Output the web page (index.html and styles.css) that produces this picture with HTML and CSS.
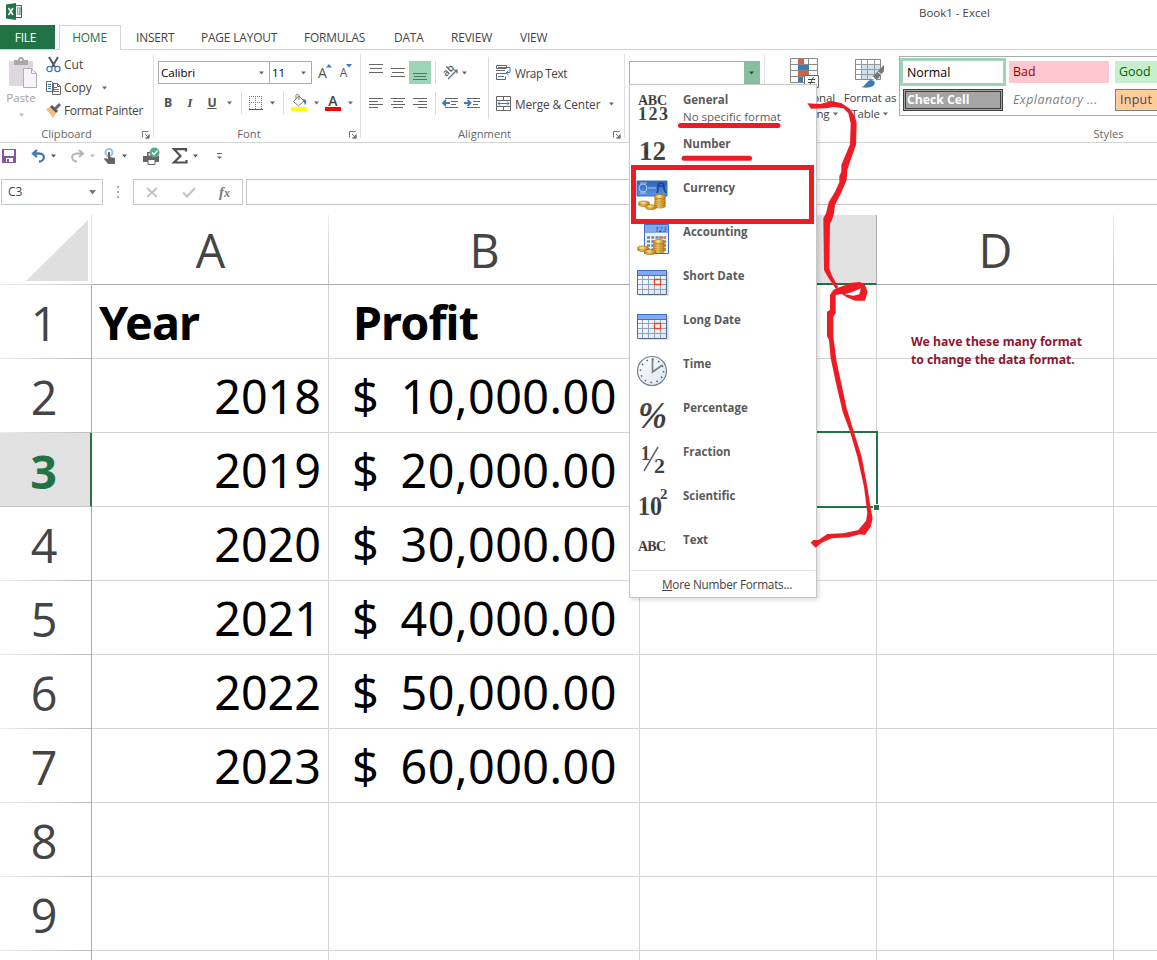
FILE: index.html
```html
<!DOCTYPE html>
<html lang="en">
<head>
<meta charset="utf-8">
<title>Book1 - Excel</title>
<link rel="stylesheet" href="styles.css">
</head>
<body>
<svg class="defs" width="0" height="0">
  <defs>
    <symbol id="arrow" viewBox="0 0 7 4"><path d="M1 0.5h5L3.5 3.5z" fill="currentColor"/></symbol>
    <symbol id="launch" viewBox="0 0 8 8"><path d="M0.5 6.5v-6h6M3 3l3.5 3.5M7 3.500v3.500H3.500" fill="none" stroke="#777"/><path d="M7.500 3v4.500H3z" fill="#777"/></symbol>
    <linearGradient id="metal" x1="0" y1="0" x2="0" y2="1"><stop offset="0" stop-color="#666"/><stop offset=".55" stop-color="#333"/><stop offset="1" stop-color="#5a5a5a"/></linearGradient>
    <linearGradient id="blue" x1="0" y1="0" x2="0" y2="1"><stop offset="0" stop-color="#2f62bd"/><stop offset="1" stop-color="#5d94e2"/></linearGradient>
    <linearGradient id="gold" x1="0" y1="0" x2="1" y2="0"><stop offset="0" stop-color="#d79a24"/><stop offset=".4" stop-color="#ffe48b"/><stop offset="1" stop-color="#bd7c10"/></linearGradient>
    <linearGradient id="face" x1="0" y1="0" x2="1" y2="1"><stop offset="0" stop-color="#fff"/><stop offset="1" stop-color="#d9e4f1"/></linearGradient>
    <symbol id="coins" viewBox="0 0 28 16">
      <g fill="url(#gold)" stroke="#a8710f" stroke-width=".7">
        <ellipse cx="6" cy="10.500" rx="5.500" ry="2"/><ellipse cx="6" cy="9" rx="5.500" ry="2"/>
        <ellipse cx="22" cy="12" rx="5.500" ry="2"/><ellipse cx="22" cy="10" rx="5.500" ry="2"/><ellipse cx="22" cy="8" rx="5.500" ry="2"/><ellipse cx="22" cy="6" rx="5.500" ry="2"/><ellipse cx="22" cy="4" rx="5.500" ry="2"/><ellipse cx="22" cy="2.500" rx="5.500" ry="2"/>
        <ellipse cx="13" cy="13.800" rx="5.500" ry="1.800"/><ellipse cx="13" cy="12.500" rx="5.500" ry="1.800"/>
      </g>
    </symbol>
    <symbol id="calendar" viewBox="0 0 32 28">
      <path d="M2 3h30v24H2z" fill="#ccc" opacity=".6"/><path d="M.5 1.500h29v24H.5z" fill="url(#face)" stroke="#526a86"/>
      <path d="M1 2h28v5H1z" fill="#83aaf5"/><path d="M0 1.500h30M1 6.500h28" stroke="#3f70d2"/>
      <path d="M5.500 7v18M11.500 7v18M17.500 7v18M23.500 7v18M1 10.500h28M1 15.500h28M1 20.500h28" stroke="#8fa2bd" fill="none"/>
      <path d="M17.500 10.500h6v5h-6z" fill="#fff" stroke="#e0481d" stroke-width="1.300"/>
    </symbol>
  </defs>
</svg>
<div class="app">
  <header class="titlebar">
    <svg class="logo" width="17" height="17" viewBox="0 0 17 17"><path d="M9 2.500h6.500v12H9z" fill="#fff" stroke="#217346"/><path d="M11 5h1.500M13 5h2M11 7h1.500M13 7h2M11 9h1.500M13 9h2M11 11h1.500M13 11h2" stroke="#217346"/><path d="M0 1.500L10 0v17L0 15.500z" fill="#217346"/><path d="M2.500 5l4.500 7M7 5l-4.500 7" stroke="#fff" stroke-width="1.600"/></svg>
    <span class="doc">Book1 - Excel</span>
  </header>
  <nav class="tabs">
    <span class="tab file">FILE</span><span class="tab home">HOME</span><span class="tab insert">INSERT</span><span class="tab layout">PAGE LAYOUT</span><span class="tab formulas">FORMULAS</span><span class="tab data">DATA</span><span class="tab review">REVIEW</span><span class="tab view">VIEW</span>
  </nav>
  <section class="ribbon">
    <div class="group clipboard">
      <div class="body">
        <div class="paste">
          <svg width="29" height="31" viewBox="0 0 29 31"><path d="M0 3h24v25H0z" fill="#ddd8dd"/><path d="M5 2h4a3 3 0 0 1 6 0h4v5H5z" fill="#aaa"/><circle cx="12" cy="2" r="1" fill="#fff"/><path d="M14.500 10.500h8l5 5v14h-13z" fill="#f8f5fa" stroke="#b4acb6"/><path d="M22.500 10.500v5h5" fill="none" stroke="#b4acb6"/></svg>
          <span>Paste</span><svg class="ar" width="7" height="4"><use href="#arrow"/></svg>
        </div>
        <div class="clips">
          <div class="clip"><svg width="15" height="16" viewBox="0 0 15 16"><path d="M3 0l6 10M12 0L6 10" stroke="#555" stroke-width="2"/><circle cx="3.500" cy="12" r="2.600" fill="none" stroke="#3f7ab8" stroke-width="1.300"/><circle cx="11.500" cy="12" r="2.600" fill="none" stroke="#3f7ab8" stroke-width="1.300"/></svg><span>Cut</span></div>
          <div class="clip"><svg width="15" height="15" viewBox="0 0 15 15"><path d="M.5 1.500h5l2 2v8h-7zM6.500 3.500h5l3 3v8h-8z" fill="#fff" stroke="#666"/><path d="M11.500 3.500v3h3" fill="none" stroke="#666"/><path d="M2 4.500h3M2 6.500h3M2 8.500h3M8 7.500h3M8 9.500h5M8 11.500h5" stroke="#3f7ab8"/></svg><span class="t-copy">Copy</span><svg class="ar" width="7" height="4"><use href="#arrow"/></svg></div>
          <div class="clip"><svg width="15" height="15" viewBox="0 0 15 15"><path d="M0 6l4-2 6 6-3 5z" fill="#eec07d"/><path d="M4 4l2-2 6 6-2 2z" fill="#555"/><path d="M9 6l5-5" stroke="#666" stroke-width="3"/></svg><span class="t-fp">Format Painter</span></div>
        </div>
      </div>
      <div class="label">Clipboard<svg class="launch" width="8" height="8"><use href="#launch"/></svg></div>
    </div>
    <div class="group font">
      <div class="body">
        <div class="fields">
          <div class="combo family"><span>Calibri</span><svg width="7" height="4"><use href="#arrow"/></svg></div>
          <div class="combo size"><span>11</span><svg width="7" height="4"><use href="#arrow"/></svg></div>
          <span class="grow">A<svg width="6" height="4" viewBox="0 0 6 4"><path d="M0 3.500L3 0l3 3.500z" fill="#3f7ab8"/></svg></span>
          <span class="grow shrink">A<svg width="6" height="4" viewBox="0 0 6 4"><path d="M0 0h6L3 3.500z" fill="#3f7ab8"/></svg></span>
        </div>
        <div class="fonttools">
          <b>B</b><i>I</i><u>U</u><svg width="7" height="4"><use href="#arrow"/></svg><span class="sep"></span>
          <svg width="14" height="14" viewBox="0 0 14 14"><path d="M0 .5h14M0 6.500h14M.5 0v13M6.500 0v13M12.500 0v13" stroke="#777" stroke-dasharray="1 1"/><path d="M0 13.500h14" stroke="#555"/></svg>
          <svg width="7" height="4"><use href="#arrow"/></svg><span class="sep"></span>
          <svg width="17" height="17" viewBox="0 0 17 17"><path d="M2.500 7.500L8 2l5 5-5.500 5z" fill="#fff" stroke="#777"/><path d="M5 5V1.500c0-1.500 3-1.500 3 0V6" fill="none" stroke="#777"/><path d="M12 5c4 0 4 4 2 6-1-1 0-3-2-4z" fill="#3f7ab8"/><path d="M0 13h16v4H0z" fill="#ff0"/></svg>
          <svg width="7" height="4"><use href="#arrow"/></svg>
          <span class="fcolor">A</span>
          <svg width="7" height="4"><use href="#arrow"/></svg>
        </div>
      </div>
      <div class="label">Font<svg class="launch" width="8" height="8"><use href="#launch"/></svg></div>
    </div>
    <div class="group align">
      <div class="body">
        <div class="arow">
          <svg width="14" height="23"><path d="M0 3.500h14M1 7.500h12M0 11.500h14" stroke="#666"/></svg>
          <svg width="14" height="23"><path d="M0 7.500h14M1 11.500h12M0 15.500h14" stroke="#666"/></svg>
          <span class="on"><svg width="14" height="23"><path d="M0 12.500h14M1 15.500h12M0 18.500h14" stroke="#4f7560"/></svg></span>
          <span class="sep"></span>
          <span class="orient"><svg width="17" height="17" viewBox="0 0 17 17"><text x="1" y="11" transform="rotate(-45 5 8)" class="abt">ab</text><path d="M6 15l9-9M11.500 6H15v3.500" fill="none" stroke="#666" stroke-width="1.200"/></svg><svg width="7" height="4"><use href="#arrow"/></svg></span>
          <span class="sep tall"></span>
          <svg width="16" height="15" viewBox="0 0 16 15"><path d="M.5 .5h10v3H.5zM10 8.500H.5v6h9v-3" fill="none" stroke="#666"/><path d="M0 5.500h9" stroke="#666"/><path d="M2 2.500h12v5h-4M12.500 5.500L10 8l2.500 2M2 8.500h5M2 11.500h6" fill="none" stroke="#3f7ab8"/></svg>
          <span class="t-wrap">Wrap Text</span>
        </div>
        <div class="arow">
          <svg width="14" height="12"><path d="M0 .5h14M0 3.500h9M0 6.500h14M0 9.500h9" stroke="#666"/></svg>
          <svg width="14" height="12"><path d="M0 .5h14M2 3.500h10M0 6.500h14M2 9.500h10" stroke="#666"/></svg>
          <svg width="14" height="12"><path d="M0 .5h14M5 3.500h9M0 6.500h14M5 9.500h9" stroke="#666"/></svg>
          <span class="sep"></span>
          <span class="orient indents"><svg width="17" height="12"><path d="M3 .5h13M9 3.500h7M9 6.500h5M3 9.500h13" stroke="#666"/><path d="M1 5h7M4 2L1 5l3 3" stroke="#3f7ab8" stroke-width="1.800" fill="none"/></svg><svg width="17" height="12"><path d="M3 .5h13M9 3.500h7M9 6.500h5M3 9.500h13" stroke="#666"/><path d="M0 5h6M3.500 2l3 3-3 3" stroke="#3f7ab8" stroke-width="1.800" fill="none"/></svg></span>
          <span class="sep tall"></span>
          <svg width="15" height="15" viewBox="0 0 15 15"><path d="M.5 .5h14v14H.5zM.5 4.500h14M.5 10.500h14M7.500 .5v4M7.500 10.500v4" fill="none" stroke="#666"/><path d="M2 7.500h11M4 5.500l-2 2 2 2M11 5.500l2 2-2 2" fill="none" stroke="#3f7ab8"/></svg>
          <span class="t-merge">Merge &amp; Center<svg width="7" height="4"><use href="#arrow"/></svg></span>
        </div>
      </div>
      <div class="label">Alignment<svg class="launch" width="8" height="8"><use href="#launch"/></svg></div>
    </div>
    <div class="group number">
      <div class="nfield"><span class="nbtn"><svg width="7" height="4"><use href="#arrow"/></svg></span></div>
    </div>
    <div class="group styles">
      <div class="body">
        <div class="big cond">
          <svg width="30" height="31" viewBox="0 0 30 31"><path d="M.5 .5h27v24H.5zM.5 6.500h27M.5 12.500h27M.5 18.500h27M8.500 .5v24M18.500 .5v24" fill="#fff" stroke="#888"/><path d="M8 1h6v5H8zM8 13h10v5H8z" fill="#d65f3d"/><path d="M8 7h11v5H8zM8 19h5v5H8z" fill="#3f7ab8"/><path d="M14.500 17.500h14v12h-14z" fill="#fff" stroke="#666"/><path d="M18 21.500h7M18 24.500h7M23.500 19l-4 8" stroke="#444"/></svg>
          <span class="t-cond">Conditional</span><span class="t-cond2">Formatting <svg width="7" height="4"><use href="#arrow"/></svg></span>
        </div>
        <div class="big table">
          <svg width="30" height="30" viewBox="0 0 30 30"><path d="M.5 .5h25v20H.5z" fill="#fff" stroke="#888"/><path d="M7 6h18v14H7z" fill="#cfe0f0"/><path d="M.5 5.500h25M.5 10.500h25M.5 15.500h25M6.500 .5v20M12.500 .5v20M19.500 .5v20" stroke="#999" fill="none"/><path d="M29 6v6l-8 10-4-4z" fill="#777"/><path d="M23 13l4 3" stroke="#fff"/><path d="M17 18l4 4" stroke="#fff" stroke-width="2"/><path d="M6 28c4 0 6-7 10-7 4 0 5 4 2 6-3 2-9 2-12 1z" fill="#3f7ab8"/></svg>
          <span class="t-fmt">Format as</span><span class="t-table">Table <svg width="7" height="4"><use href="#arrow"/></svg></span>
        </div>
        <div class="gallery">
          <span class="st normal">Normal</span><span class="st bad">Bad</span><span class="st good">Good</span>
          <span class="st check">Check Cell</span><span class="st expl">Explanatory ...</span><span class="st input">Input</span>
        </div>
      </div>
      <div class="label">Styles</div>
    </div>
  </section>
  <section class="qat">
    <svg class="q-save" width="14" height="14" viewBox="0 0 14 14"><path d="M0 0h14v14H0z" fill="#8354a8"/><path d="M2 1h10v6H2zM4 9h7v4H4z" fill="#fff"/><path d="M5 10h2v3H5z" fill="#8354a8"/></svg>
    <svg class="q-undo" width="15" height="14" viewBox="0 0 15 14"><path d="M6 1L2 4.500 6 8M2 4.500h6c7 0 6 8 0 8" fill="none" stroke="#3f7ab8" stroke-width="2.300"/></svg>
    <svg class="q-drop" width="7" height="4"><use href="#arrow"/></svg>
    <svg class="q-redo" width="15" height="14" viewBox="0 0 15 14"><path d="M9 1l4 3.500L9 8M13 4.500H7c-7 0-6 8 0 8" fill="none" stroke="#b5b5b5" stroke-width="2"/></svg>
    <svg class="q-drop dim" width="7" height="4"><use href="#arrow"/></svg>
    <svg class="q-touch" width="13" height="16" viewBox="0 0 13 16"><circle cx="5" cy="4.500" r="3.500" fill="none" stroke="#9fc0df" stroke-width="2"/><path d="M4 4h2v5l5 1v6H4l-4-5 1-1 3 1z" fill="#666"/></svg>
    <svg class="q-drop" width="7" height="4"><use href="#arrow"/></svg>
    <svg class="q-print" width="16" height="17" viewBox="0 0 16 17"><path d="M4 4h7v4H4zM0 8h16v6H0z" fill="#666"/><path d="M5 5h6v3H5zM5 11.500h7v5H5z" fill="#fff" stroke="#666"/><circle cx="11.500" cy="4.500" r="5" fill="#5fa78b"/><path d="M9 4.500l2 2 3.500-4" fill="none" stroke="#fff" stroke-width="1.400"/></svg>
    <svg class="q-sum" width="16" height="16" viewBox="0 0 16 16"><path d="M14 3.500V1.200H2L8.500 8 2 14.500h12.500V12" fill="none" stroke="#505050" stroke-width="2.200"/></svg>
    <svg class="q-drop" width="7" height="4"><use href="#arrow"/></svg>
    <svg class="q-more" width="7" height="7" viewBox="0 0 7 7"><path d="M1 .5h5" stroke="#666"/><path d="M1 3.500h5L3.500 6z" fill="#666"/></svg>
  </section>
  <section class="fbar">
    <div class="namebox"><span>C3</span><svg width="9" height="5" viewBox="0 0 9 5"><path d="M1 0h7L4.500 4.500z" fill="#777"/></svg></div>
    <svg class="dots" width="3" height="12"><path d="M0 1h2M0 6h2M0 11h2" stroke="#aaa" stroke-width="2"/></svg>
    <div class="fbtns">
      <svg width="12" height="11"><path d="M1 1l10 9M11 1L1 10" stroke="#c0c0c0" stroke-width="1.800"/></svg>
      <svg width="14" height="11"><path d="M1 5.500l4 4L13 1" fill="none" stroke="#c8c8c8" stroke-width="2.400"/></svg>
      <span class="fx">f<small>x</small></span>
    </div>
    <div class="finput"></div>
  </section>
  <main class="sheet">
    <div class="corner"><svg width="62" height="62"><path d="M62 0v61H0z" fill="#dfdfdf"/></svg></div>
    <div class="ch">A</div><div class="ch">B</div><div class="ch sel"></div><div class="ch">D</div><div class="ch"></div>
    <div class="rh">1</div><div class="c hd ca">Year</div><div class="c hd cb">Profit</div><div class="c"></div><div class="c note"><span>We have these many format<br>to change the data format.</span></div><div class="c"></div>
    <div class="rh">2</div><div class="c num">2018</div><div class="c cur"><span>$</span><span class="amt">10,000.00</span></div><div class="c"></div><div class="c"></div><div class="c"></div>
    <div class="rh sel">3</div><div class="c num">2019</div><div class="c cur"><span>$</span><span class="amt">20,000.00</span></div><div class="c active"></div><div class="c"></div><div class="c"></div>
    <div class="rh">4</div><div class="c num">2020</div><div class="c cur"><span>$</span><span class="amt">30,000.00</span></div><div class="c"></div><div class="c"></div><div class="c"></div>
    <div class="rh">5</div><div class="c num">2021</div><div class="c cur"><span>$</span><span class="amt">40,000.00</span></div><div class="c"></div><div class="c"></div><div class="c"></div>
    <div class="rh">6</div><div class="c num">2022</div><div class="c cur"><span>$</span><span class="amt">50,000.00</span></div><div class="c"></div><div class="c"></div><div class="c"></div>
    <div class="rh">7</div><div class="c num">2023</div><div class="c cur"><span>$</span><span class="amt">60,000.00</span></div><div class="c"></div><div class="c"></div><div class="c"></div>
    <div class="rh">8</div><div class="c"></div><div class="c"></div><div class="c"></div><div class="c"></div><div class="c"></div>
    <div class="rh">9</div><div class="c"></div><div class="c"></div><div class="c"></div><div class="c"></div><div class="c"></div>
    <div class="rh"></div><div class="c"></div><div class="c"></div><div class="c"></div><div class="c"></div><div class="c"></div>
  </main>
  <div class="menu">
    <div class="item"><svg width="32" height="32" class="gl"><text x="1" y="14" font-size="14" textLength="29">ABC</text><text x="1" y="29" font-size="18" textLength="30">123</text></svg><div><b>General</b><span class="t-nsf">No specific format</span></div></div>
    <div class="item"><svg width="32" height="32" class="gl"><text x="2" y="25" font-size="27" textLength="27">12</text></svg><b>Number</b></div>
    <div class="item"><svg width="32" height="32"><path d="M0 2h30v15H0z" fill="url(#blue)" stroke="#3c6cba"/><circle cx="6" cy="9" r="4" fill="none" stroke="#a9c7f3"/><path d="M3 4h7M3 14h6M11 9h8" stroke="#a9c7f3"/><path d="M20 14l1-3V7c0-4 6-4 6 0v3l2 4M21 7h6" fill="none" stroke="#16458e" stroke-width="1.600"/><use href="#coins" x="1" y="15" width="28" height="16"/></svg><b>Currency</b></div>
    <div class="item"><svg width="32" height="32"><path d="M7.500 1.500h24v29h-24z" fill="#eef3fa" stroke="#3c6cba"/><path d="M8 2h23v8H8z" fill="#7ea9ec"/><text x="18" y="9" fill="#16458e" class="dg">123</text><path d="M10 14.500h19M10 18.500h19M10 22.500h19M10 26.500h19" stroke="#75859a" stroke-width="2.500" stroke-dasharray="3 1.300"/><path d="M22 14.500h7M24 19h5" stroke="#e57b3c" stroke-width="2.500" stroke-dasharray="3 1.300"/><use href="#coins" x="0" y="16" width="28" height="16"/></svg><b>Accounting</b></div>
    <div class="item"><svg width="32" height="32"><use href="#calendar" y="2" width="32" height="28"/></svg><b>Short Date</b></div>
    <div class="item"><svg width="32" height="32"><use href="#calendar" y="2" width="32" height="28"/></svg><b>Long Date</b></div>
    <div class="item"><svg width="32" height="32"><circle cx="15" cy="16" r="14.500" fill="url(#face)" stroke="#728090" stroke-width="1.200"/><circle cx="15" cy="16" r="11.500" fill="none" stroke="#566271" stroke-width="1.600" stroke-dasharray="1.500 4.520"/><path d="M15.500 3v14l10-7" fill="none" stroke="#7c8289" stroke-width="1.700"/></svg><b>Time</b></div>
    <div class="item"><svg width="32" height="32" class="gl"><text x="1" y="29" font-size="38" font-style="italic" textLength="29" lengthAdjust="spacingAndGlyphs">%</text></svg><b>Percentage</b></div>
    <div class="item"><svg width="32" height="32" class="gl"><text x="4" y="17" font-size="22" textLength="9" lengthAdjust="spacingAndGlyphs">1</text><text x="17" y="30" font-size="22">2</text><path d="M21 4L7 28" stroke="#666" stroke-width="1.500"/></svg><b>Fraction</b></div>
    <div class="item"><svg width="32" height="32" class="gl"><text x="1" y="28" font-size="28" textLength="24" lengthAdjust="spacingAndGlyphs">10</text><text x="23" y="12" font-size="15">2</text></svg><b>Scientific</b></div>
    <div class="item"><svg width="32" height="32" class="gl"><text x="1" y="20" font-size="14" textLength="28">ABC</text></svg><b>Text</b></div>
    <div class="more"><span><u>M</u>ore Number Formats...</span></div>
  </div>
  <svg class="ink" width="1157" height="960" viewBox="0 0 1157 960">
    <path d="M680.500 125.500h97.500M684 158.300h65.500" stroke="#ed1c24" stroke-width="5" stroke-linecap="round"/>
    <path d="M633.500 167.500h178v54h-178z" fill="none" stroke="#ed1c24" stroke-width="5"/>
    <g fill="#ed1c24" fill-rule="evenodd" transform="translate(800 95) scale(.33333)">
      <path d="M22 25L60 27 95 18 125 25 150 42 165 65 170 85 168 150 150 200 142 225 140 255 125 290 105 330 102 355 95 378 90 385 88 520 95 540 115 577 108 582 85 548 72 525 70 370 78 355 86 322 105 290 118 262 118 243 124 230 124 210 150 148 152 85 145 55 130 40 100 36 80 40 33 41z"/>
      <path d="M107 600L107 655 100 665 100 725 110 800 140 940 160 1005 185 1085 202 1175 213 1245 218 1270 212 1295 195 1320 180 1318 145 1327 95 1330 65 1343 47 1358 32 1343 40 1335 55 1335 82 1317 130 1315 175 1305 198 1277 202 1255 192 1175 172 1085 150 1010 128 950 108 865 92 790 87 735 81 723 81 650 90 645 90 600 100 585 110 580 155 563 180 561 195 570 203 590 195 617 165 617 140 607 125 597zM133 598L155 592 183 580 178 598 160 602z"/>
    </g>
  </svg>
</div>
</body>
</html>
```
FILE: styles.css
```css
* { box-sizing: border-box; }
body { margin: 0; background: #fff; font: 12px/16px "Open Sans", "Noto Sans", sans-serif; color: #444; }
svg { display: block; flex: none; overflow: visible; }
.defs { position: absolute; }
.app { position: relative; width: 1157px; height: 960px; overflow: hidden; display: flex; flex-direction: column; white-space: nowrap; }
.titlebar { height: 25px; display: flex; padding: 3px 0 0 6px; flex: none; }
.doc { margin: 2px 0 0 896px; font-size: 11.5px; }
.tabs { height: 25px; flex: none; display: flex; border-bottom: 1px solid #d4d4d4; line-height: 25px; font-size: 11.9px; }
.tab { flex: none; letter-spacing: -.15px; }
.file { width: 55px; background: #217346; color: #fff; text-align: center; padding-right: 4px; }
.home { width: 62px; height: 25px; margin-left: 4px; border: 1px solid #d4d4d4; border-bottom: 0; background: #fff; color: #217346; text-align: center; line-height: 23px; padding-right: 1px; }
.insert { margin-left: 15px; width: 65px; }
.layout { width: 103px; }
.formulas { width: 90px; }
.data { width: 57px; }
.review { width: 69px; }
.ribbon { height: 93px; flex: none; display: flex; border-bottom: 1px solid #d4d4d4; }
.group { flex: none; display: flex; flex-direction: column; position: relative; }
.group::after { content: ""; position: absolute; right: 0; top: 4px; height: 84px; width: 1px; background: #e1e1e1; }
.styles::after { display: none; }
.body { height: 76px; flex: none; }
.body svg { color: #666; }
.label { font-size: 11.2px; color: #666; height: 16px; text-align: center; position: relative; }
.launch { position: absolute; right: 4px; bottom: 3px; }
.clipboard { width: 154px; }
.clipboard .label { padding-right: 21px; }
.clipboard .body { display: flex; padding-top: 8px; }
.paste { width: 46px; color: #a0a0a0; display: flex; flex-direction: column; align-items: center; padding-right: 4px; font-size: 11.5px; }
.paste svg { margin-left: 4px; }
.paste .ar { margin: 7px 0 0 0; color: #bbb; }
.paste span { margin-top: 1px; }
.clips { display: flex; flex-direction: column; margin-top: -5px; }
.clip { display: flex; align-items: center; height: 23px; gap: 3px; }
.clip .ar { margin-left: 6px; }
.t-fp { letter-spacing: -.33px; }
.t-copy { letter-spacing: -.15px; }
.font { width: 207px; }
.font .label { padding-right: 17px; }
.fields { display: flex; padding: 11px 0 0 4px; height: 34px; }
.combo { border: 1px solid #ababab; height: 23px; display: flex; align-items: center; justify-content: space-between; padding: 0 4px 0 2px; color: #000; font-size: 11.5px; }
.family { width: 112px; }
.size { width: 43px; margin-left: -1px; }
.grow { font-size: 14px; display: flex; margin: 4px 0 0 6px; color: #555; }
.shrink { font-size: 12px; margin-left: 8px; }
.grow svg { margin: -1px 0 0 -1px; }
.fonttools { display: grid; grid-template-columns: 22px 22px 22px 12px 12px 18px 14px 8px 24px 10px 24px 10px; justify-items: center; align-items: center; padding: 7px 0 0 3px; height: 30px; }
.fonttools b, .fonttools u { font-size: 12.2px; font-weight: 700; color: #505050; }
.fonttools i { font-weight: 700; font-family: "Liberation Serif", serif; font-size: 13.500px; color: #505050; }
.sep { width: 1px; height: 23px; background: #dcdcdc; }
.fcolor { font-weight: 600; font-size: 14px; line-height: 13px; border-bottom: 4px solid red; width: 16px; text-align: center; }
.align { width: 264px; }
.align .label { padding-right: 17px; }
.align .body { padding: 11px 0 0 4px; display: flex; flex-direction: column; gap: 8px; }
.arow { display: grid; grid-template-columns: 22px 22px 22px 9px 44px 9px 21px auto; grid-template-rows: 23px; height: 23px; justify-items: center; align-items: center; font-size: 11.8px; }
.on { width: 22px; height: 23px; background: #9fd5b7; display: flex; justify-content: center; }
.orient { display: flex; align-items: center; gap: 2px; justify-self: start; padding-left: 2px; }
.indents { gap: 5px; }
.abt { font: 600 10px "Open Sans", sans-serif; fill: #555; }
.tall { height: 31px; }
.t-wrap { justify-self: start; padding-left: 1px; letter-spacing: -.45px; }
.t-merge { justify-self: start; padding-left: 1px; display: flex; align-items: center; gap: 8px; letter-spacing: -.1px; }
.number { width: 140px; }
.nfield { width: 131px; height: 24px; margin: 11px 0 0 4px; border: 1px solid #86bfa0; display: flex; justify-content: flex-end; }
.nbtn { width: 15px; background: #86bfa0; display: flex; align-items: center; justify-content: center; }
.styles { width: 392px; }
.styles .body { display: flex; }
.big { display: flex; flex-direction: column; align-items: center; padding-top: 8px; font-size: 11.5px; letter-spacing: -.1px; }
.big span { display: flex; align-items: center; gap: 2px; line-height: 16px; }
.cond { width: 80px; }
.cond span { margin-top: 1px; }
.cond .t-cond2 { margin-top: 0; }
.table { width: 54px; padding: 9px 4px 0 0; }
.table span { margin-top: 1px; }
.table .t-table { margin-top: 0; }
.gallery { border: 1px solid #ababab; border-right: 0; margin-top: 6px; height: 60px; width: 258px; display: grid; grid-template-columns: 106px 106px 46px; grid-template-rows: 30px 28px; overflow: hidden; font-size: 12.4px; }
.st { height: 22px; line-height: 22px; margin: 4px 3px 0; padding-left: 4px; }
.normal { margin: 1px 0 0; height: 28px; border: 3px solid #9fd5b7; color: #000; line-height: 23px; }
.bad { background: #ffc7ce; color: #9c0006; }
.good { background: #c6efce; color: #006100; margin-right: 0; }
.check { background: #a5a5a5; color: #fff; font-weight: 700; border: 3px double #3f3f3f; line-height: 15px; margin-top: 2px; padding-left: 1px; font-size: 12.200px; }
.expl { color: #7f7f7f; font-style: italic; margin-top: 2px; letter-spacing: .45px; }
.input { background: #fc9; color: #3f3f76; border: 1px solid #7f7f7f; border-right: 0; margin: 2px 0 0 3px; line-height: 20px; padding-left: 4px; letter-spacing: .3px; }
.styles .label { padding-left: 295px; }
.qat { height: 36px; flex: none; display: flex; align-items: center; padding: 0 0 10px 2px; color: #555; }
.q-drop { margin-left: 4px; }
.q-undo { margin-left: 15px; }
.q-redo { margin-left: 13px; }
.q-touch { margin-left: 8px; }
.q-print { margin-left: 15px; }
.q-sum { margin-left: 13px; }
.q-more { margin-left: 17px; }
.dim { color: #bbb; }
.fbar { height: 36px; flex: none; display: flex; }
.namebox { width: 102px; height: 26px; margin-left: 1px; border: 1px solid #c6c6c6; display: flex; justify-content: space-between; align-items: center; padding: 0 5px 0 6px; }
.dots { margin: 7px 0 0 14px; }
.fbtns { width: 110px; height: 26px; margin-left: 13px; border: 1px solid #c6c6c6; display: flex; align-items: center; justify-content: space-between; padding: 0 12px 0 12px; }
.fx { font: italic 700 15px "Liberation Serif", serif; color: #777; }
.fx small { font-size: 12px; }
.finput { flex: 1; height: 26px; margin-left: 3px; border: 1px solid #c6c6c6; border-right: 0; }
.sheet { display: grid; flex: none; grid-template-columns: 92px 237px 311px 237px 237px 44px; grid-template-rows: 70px; grid-auto-rows: 74px; font: 46.700px/74px "Noto Sans", sans-serif; color: #000; }
.corner { padding: 5px 3px 0 0; display: flex; justify-content: flex-end; border-right: 1px solid #e1e1e1; background: linear-gradient(90deg, #ececec, #c6c6c6) bottom / 100% 1px no-repeat; }
.ch { background: linear-gradient(#ececec, #c6c6c6) right / 1px 100% no-repeat; border-bottom: 1px solid #ababab; text-align: center; color: #444; line-height: 71px; font-family: "Open Sans", sans-serif; }
.ch.sel { background: #e1e1e1; border-bottom: 2px solid #217346; border-right: 1px solid #ababab; }
.rh { border-right: 1px solid #ababab; background: linear-gradient(90deg, #ececec, #bbb) bottom / 100% 1px no-repeat; text-align: center; color: #444; padding-right: 3px; font-family: "Open Sans", sans-serif; line-height: 76px; }
.rh.sel { background: #e1e1e1; color: #217346; font-weight: 700; border-right: 2px solid #217346; border-bottom: 1px solid #c6c6c6; }
.c { border-right: 1px solid #d4d4d4; border-bottom: 1px solid #d4d4d4; min-width: 0; line-height: 74px; }
.hd { font-weight: 700; padding-left: 7px; letter-spacing: -.9px; line-height: 75px; }
.cb { padding-left: 24px; }
.num { text-align: right; padding-right: 7px; }
.cur { display: flex; justify-content: space-between; padding: 0 22px 0 23px; }
.amt { letter-spacing: .5px; }
.note { font: 700 12.200px/18px "Noto Sans", sans-serif; color: #8f1530; padding: 48px 0 0 34px; }
.note span { display: block; }
.active { position: relative; }
.active::before { content: ""; position: absolute; inset: -2px -2px -2px -2px; border: 2px solid #217346; }
.active::after { content: ""; position: absolute; right: -3px; bottom: -4px; width: 5px; height: 5px; background: #217346; outline: 1px solid #fff; }
.menu { position: absolute; left: 629px; top: 84px; width: 188px; height: 514px; background: #fff; border: 1px solid #c6c6c6; box-shadow: 2px 2px 4px rgba(0,0,0,.14); }
.item { height: 44px; padding: 7px 0 0 7px; display: flex; gap: 14px; font-size: 11.500px; color: #5a5a5a; }
.item svg { margin-top: -1px; }
.item b { display: block; }
.item div span { display: block; margin-top: 1px; }
.gl { font-family: "Liberation Serif", serif; font-weight: 700; fill: url(#metal); }
.dg { font: italic 7px "Open Sans", sans-serif; }
.more { border-top: 1px solid #e1e1e1; margin: 1px 1px 0; text-align: center; padding-top: 5px; padding-left: 8px; font-size: 11.800px; letter-spacing: -.25px; }
.ink { position: absolute; left: 0; top: 0; }
```
